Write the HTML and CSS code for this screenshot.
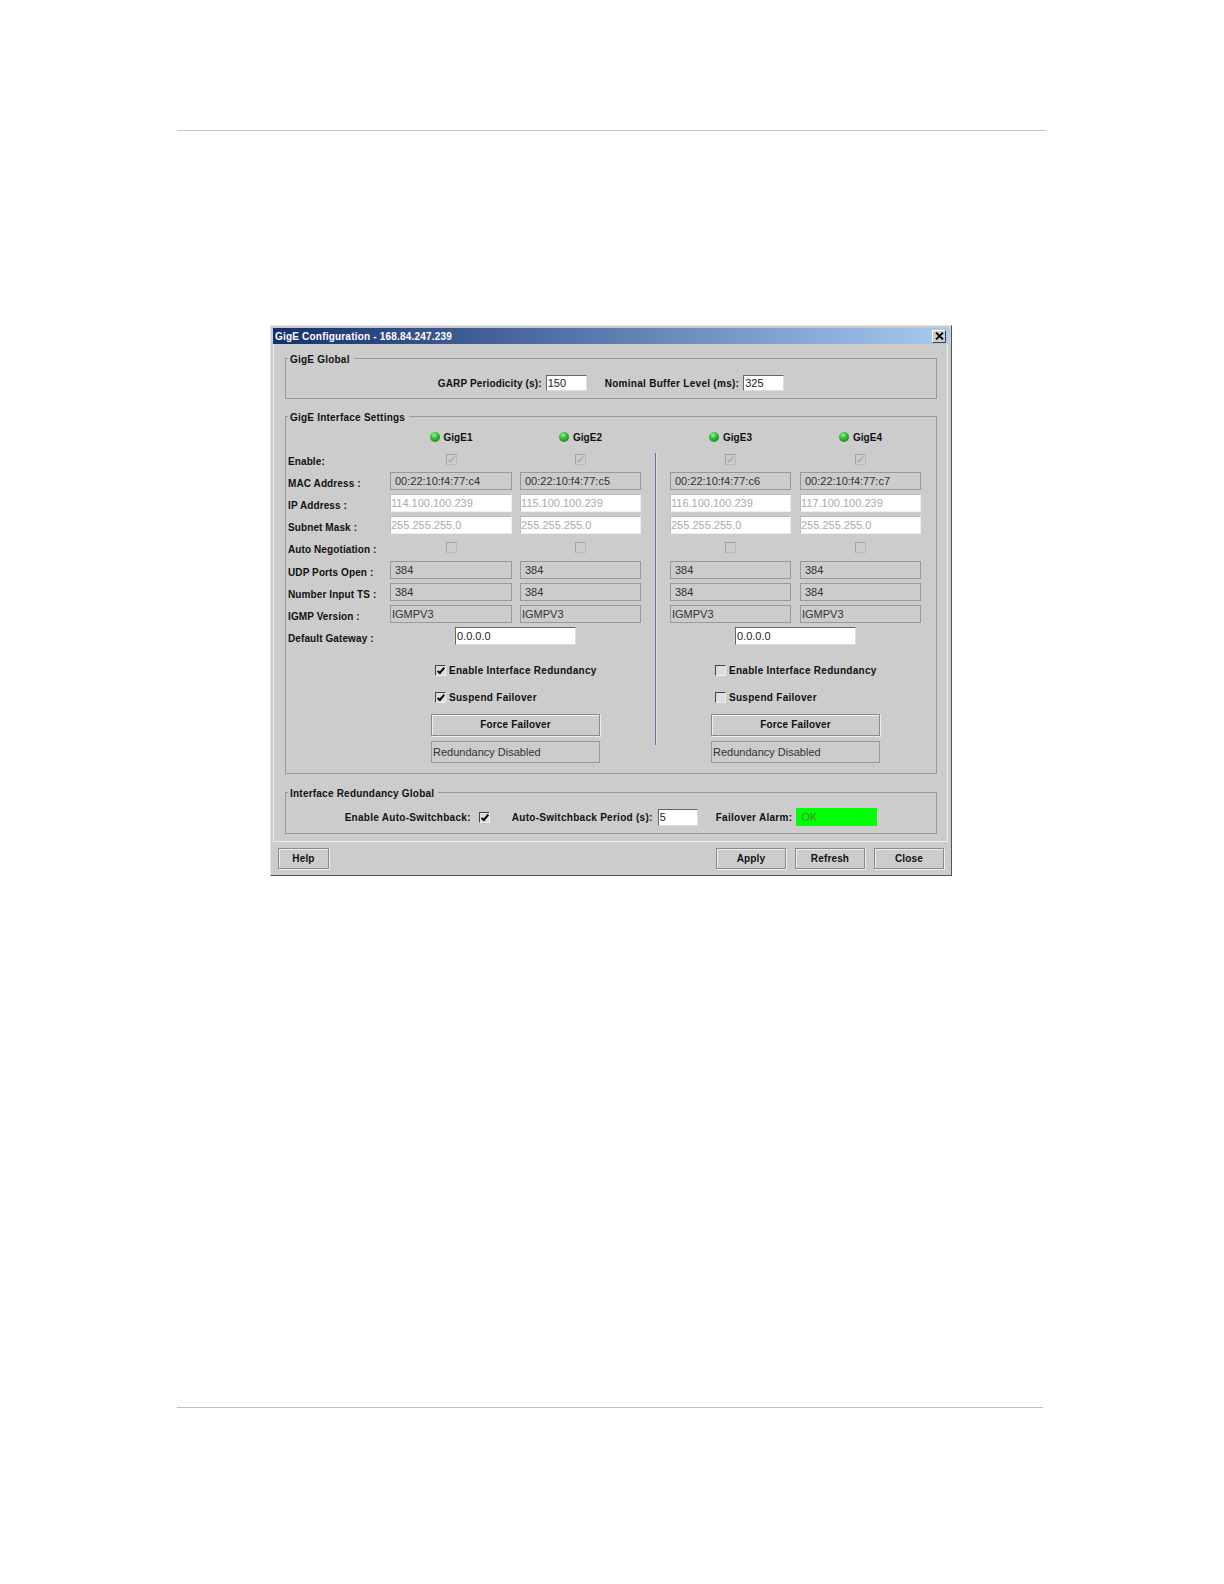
FILE: index.html
```html
<!DOCTYPE html>
<html lang="en">
<head>
  <meta charset="UTF-8">
  <title>GigE Configuration</title>
  <link rel="stylesheet" href="styles.css">
</head>
<body>
  <div class="rule rule-top"></div>

  <!-- dialog -->
  <div class="window">
    <div class="titlebar">
      <span class="title">GigE Configuration - 168.84.247.239</span>
      <span class="close-btn">
        <svg width="9" height="8" viewBox="0 0 9 8"><path d="M1 0.5 L8 7.5 M8 0.5 L1 7.5" stroke="#000" stroke-width="1.8" fill="none"/></svg>
      </span>
    </div>

    <div class="content">
      <!-- global settings -->
      <fieldset class="group">
        <legend>GigE Global</legend>
        <div class="inline-row global-row">
          <span class="label garp">GARP Periodicity (s):</span>
          <span class="field edit short">150</span>
          <span class="label next">Nominal Buffer Level (ms):</span>
          <span class="field edit short">325</span>
        </div>
      </fieldset>

      <!-- per interface settings -->
      <fieldset class="group group-ports">
        <legend>GigE Interface Settings</legend>
        <div class="ports">
          <div class="labels">
            <span class="label">Enable:</span>
            <span class="label">MAC Address :</span>
            <span class="label">IP Address :</span>
            <span class="label">Subnet Mask :</span>
            <span class="label">Auto Negotiation :</span>
            <span class="label">UDP Ports Open :</span>
            <span class="label">Number Input TS :</span>
            <span class="label">IGMP Version :</span>
            <span class="label">Default Gateway :</span>
          </div>

          <div class="pair">
            <div class="port-name"><span class="led"></span><span class="label">GigE1</span></div>
            <div class="port-name"><span class="led"></span><span class="label">GigE2</span></div>
            <span class="check off on-mark"></span>
            <span class="check off on-mark"></span>
            <span class="field ro pad">00:22:10:f4:77:c4</span>
            <span class="field ro pad">00:22:10:f4:77:c5</span>
            <span class="field dim">114.100.100.239</span>
            <span class="field dim">115.100.100.239</span>
            <span class="field dim">255.255.255.0</span>
            <span class="field dim">255.255.255.0</span>
            <span class="check off"></span>
            <span class="check off"></span>
            <span class="field ro pad">384</span>
            <span class="field ro pad">384</span>
            <span class="field ro pad">384</span>
            <span class="field ro pad">384</span>
            <span class="field ro">IGMPV3</span>
            <span class="field ro">IGMPV3</span>
            <span class="field edit gateway">0.0.0.0</span>
            <div class="failover">
              <div class="check-row"><span class="check live on-mark"></span><span class="label">Enable Interface Redundancy</span></div>
              <div class="check-row row-suspend"><span class="check live on-mark"></span><span class="label">Suspend Failover</span></div>
              <div class="btn btn-force">Force Failover</div>
              <div class="field ro status">Redundancy Disabled</div>
            </div>
          </div>

          <div class="divider"></div>

          <div class="pair pair-right">
            <div class="port-name"><span class="led"></span><span class="label">GigE3</span></div>
            <div class="port-name"><span class="led"></span><span class="label">GigE4</span></div>
            <span class="check off on-mark"></span>
            <span class="check off on-mark"></span>
            <span class="field ro pad">00:22:10:f4:77:c6</span>
            <span class="field ro pad">00:22:10:f4:77:c7</span>
            <span class="field dim">116.100.100.239</span>
            <span class="field dim">117.100.100.239</span>
            <span class="field dim">255.255.255.0</span>
            <span class="field dim">255.255.255.0</span>
            <span class="check off"></span>
            <span class="check off"></span>
            <span class="field ro pad">384</span>
            <span class="field ro pad">384</span>
            <span class="field ro pad">384</span>
            <span class="field ro pad">384</span>
            <span class="field ro">IGMPV3</span>
            <span class="field ro">IGMPV3</span>
            <span class="field edit gateway">0.0.0.0</span>
            <div class="failover">
              <div class="check-row"><span class="check live"></span><span class="label">Enable Interface Redundancy</span></div>
              <div class="check-row row-suspend"><span class="check live"></span><span class="label">Suspend Failover</span></div>
              <div class="btn btn-force">Force Failover</div>
              <div class="field ro status">Redundancy Disabled</div>
            </div>
          </div>
        </div>
      </fieldset>

      <!-- redundancy settings -->
      <fieldset class="group group-redundancy">
        <legend>Interface Redundancy Global</legend>
        <div class="inline-row redundancy-row">
          <span class="label">Enable Auto-Switchback:</span>
          <span class="check live on-mark gap-check"></span>
          <span class="label">Auto-Switchback Period (s):</span>
          <span class="field edit period">5</span>
          <span class="label next">Failover Alarm:</span>
          <span class="alarm">OK</span>
        </div>
      </fieldset>
    </div>

    <div class="footer">
      <div class="btn btn-help">Help</div>
      <div class="footer-right">
        <div class="btn btn-action">Apply</div>
        <div class="btn btn-action">Refresh</div>
        <div class="btn btn-action">Close</div>
      </div>
    </div>
  </div>

  <div class="rule rule-bottom"></div>
</body>
</html>
```

FILE: styles.css
```css
/* page */
body {
  margin: 0;
  min-height: 1584px;
  background-color: #fff;
  font-family: "Liberation Sans", Arial, sans-serif;
  font-size: 11px;
  color: #222;
}

.rule {
  height: 1px;
  margin-left: 177px;
}

.rule-top {
  width: 869px;
  padding-top: 130px;
  background-color: #b4cbdc;
  background-clip: content-box;
}

.rule-bottom {
  width: 866px;
  margin-top: 531px;
  background-color: #b3c4cc;
}

/* dialog frame */
.window {
  width: 675px;
  margin: 194px 0 0 270px;
  padding: 2px 3px 6px 2px;
  background-color: #ccc;
  border: 1px solid;
  border-color: #e4e4e4 #555 #555 #e4e4e4;
}

.titlebar {
  display: flex;
  justify-content: space-between;
  align-items: center;
  height: 16px;
  padding: 0 2px 0 2px;
  background: linear-gradient(to right, #15306f, #a6caf0);
}

.title {
  color: #fff;
  font-size: 10px;
  font-weight: bold;
  letter-spacing: 0.2px;
}

.close-btn {
  display: flex;
  justify-content: center;
  align-items: center;
  width: 12px;
  height: 11px;
  background-color: #ccc;
  border: 1px solid;
  border-color: #fff #444 #444 #fff;
}

.content {
  padding: 7px 10px 7px 11px;
  border: solid #efefef;
  border-width: 0 1px 1px 1px;
}

/* group boxes */
.group {
  margin: 0;
  padding: 0;
  min-width: 0;
  border: 1px solid #999;
}

.group legend {
  height: 14px;
  margin-left: 2px;
  padding: 0 4px 0 2px;
  font-size: 10px;
  font-weight: bold;
  line-height: 18px;
  letter-spacing: 0.22px;
  color: #111;
}

.group-ports {
  margin-top: 10px;
}

.group-redundancy {
  margin-top: 11px;
}

.label {
  font-size: 10px;
  font-weight: bold;
  letter-spacing: 0.28px;
  color: #111;
  white-space: nowrap;
}

.inline-row {
  display: flex;
  justify-content: center;
  align-items: center;
}

.inline-row .field {
  margin-left: 5px;
}

.inline-row .next {
  margin-left: 18px;
}

.global-row {
  padding: 10px 0 7px;
}

.global-row .field {
  width: 41px;
  margin-left: 4px;
}

.global-row .garp {
  letter-spacing: 0.14px;
}

.redundancy-row {
  padding: 9px 0 7px;
}

/* fields */
.field {
  display: block;
  box-sizing: border-box;
  height: 18px;
  padding: 0 1px;
  font-size: 11px;
  line-height: 16px;
  white-space: nowrap;
  border: 1px solid #999;
}

.ro {
  background-color: #ccc;
  color: #333;
}

.pad {
  padding-left: 4px;
}

.dim {
  padding-left: 0;
  background-color: #fff;
  color: #aaa;
  border-color: #bbb #eee #eee #bbb;
}

.edit {
  background-color: #fff;
  color: #222;
  border-color: #666 #ddd #ddd #666;
}

.short {
  height: 16px;
  line-height: 14px;
}

.period {
  width: 40px;
  height: 17px;
  line-height: 15px;
}

.alarm {
  box-sizing: border-box;
  width: 81px;
  height: 18px;
  margin-left: 4px;
  padding-left: 5px;
  background-color: #0f0;
  color: #4c8c3c;
  line-height: 18px;
}

/* interface table */
.ports {
  display: flex;
}

.labels {
  display: grid;
  grid-template-rows: repeat(4, 18px) 19px repeat(4, 18px);
  row-gap: 4px;
  align-items: center;
  align-self: flex-start;
  box-sizing: border-box;
  width: 104px;
  padding: 29px 0 0 2px;
}

.labels .label {
  letter-spacing: 0.1px;
}

.pair {
  display: grid;
  grid-template-columns: 122px 121px;
  grid-template-rows: repeat(5, 18px) 19px repeat(4, 18px) auto;
  gap: 4px 8px;
  align-items: center;
  padding: 5px 0 10px;
}

.pair-right {
  grid-template-columns: 121px 121px;
  column-gap: 9px;
}

.port-name {
  display: flex;
  justify-content: center;
  align-items: center;
  gap: 4px;
}

.port-name .label {
  letter-spacing: 0;
}

.led {
  width: 10px;
  height: 10px;
  border-radius: 50%;
  background: radial-gradient(circle at 40% 30%, #9cf09c 0, #2fc02f 40%, #1c8a2c 75%, #3c6c4c 100%);
}

.divider {
  flex: none;
  width: 1px;
  margin: 30px 14px 28px;
  background-color: #7070a8;
  box-shadow: 1px 0 0 #ddd;
}

/* checkboxes */
.check {
  position: relative;
  display: block;
  box-sizing: border-box;
  width: 11px;
  height: 11px;
  justify-self: center;
  border: 1px solid;
}

.off {
  background-color: #ccc;
  border-color: #a2a2a2 #bbb #bbb #a2a2a2;
}

.live {
  background-color: #ddd;
  border-color: #444 #eee #eee #444;
}

.on-mark::after {
  content: "";
  position: absolute;
  left: 3px;
  top: 0;
  width: 2px;
  height: 6px;
  border: solid #000;
  border-width: 0 2px 2px 0;
  transform: rotate(40deg);
}

.off.on-mark::after {
  border-color: #a2a2a2;
  border-width: 0 1px 1px 0;
}

.gap-check {
  margin: 0 22px 0 8px;
}

/* failover block */
.gateway {
  grid-column: span 2;
  justify-self: center;
  width: 121px;
  color: #222;
}

.failover {
  grid-column: span 2;
  justify-self: center;
  width: 169px;
  padding-top: 12px;
}

.check-row {
  display: flex;
  align-items: center;
  gap: 3px;
  height: 18px;
  padding-left: 4px;
}

.row-suspend {
  margin-top: 9px;
}

/* buttons */
.btn {
  box-sizing: border-box;
  font-size: 10px;
  font-weight: bold;
  letter-spacing: 0.15px;
  text-align: center;
  color: #111;
  border: 1px solid #8a8a8a;
  box-shadow: inset 1px 1px 0 #eee, 1px 1px 0 #eee;
}

.btn-force {
  height: 22px;
  margin-top: 8px;
  line-height: 20px;
}

.status {
  height: 22px;
  margin-top: 5px;
  line-height: 20px;
}

.footer {
  display: flex;
  justify-content: space-between;
  padding: 6px 4px 0 5px;
}

.footer-right {
  display: flex;
  gap: 9px;
}

.footer .btn {
  height: 21px;
  line-height: 19px;
}

.btn-help {
  width: 51px;
}

.btn-action {
  width: 70px;
}
```
